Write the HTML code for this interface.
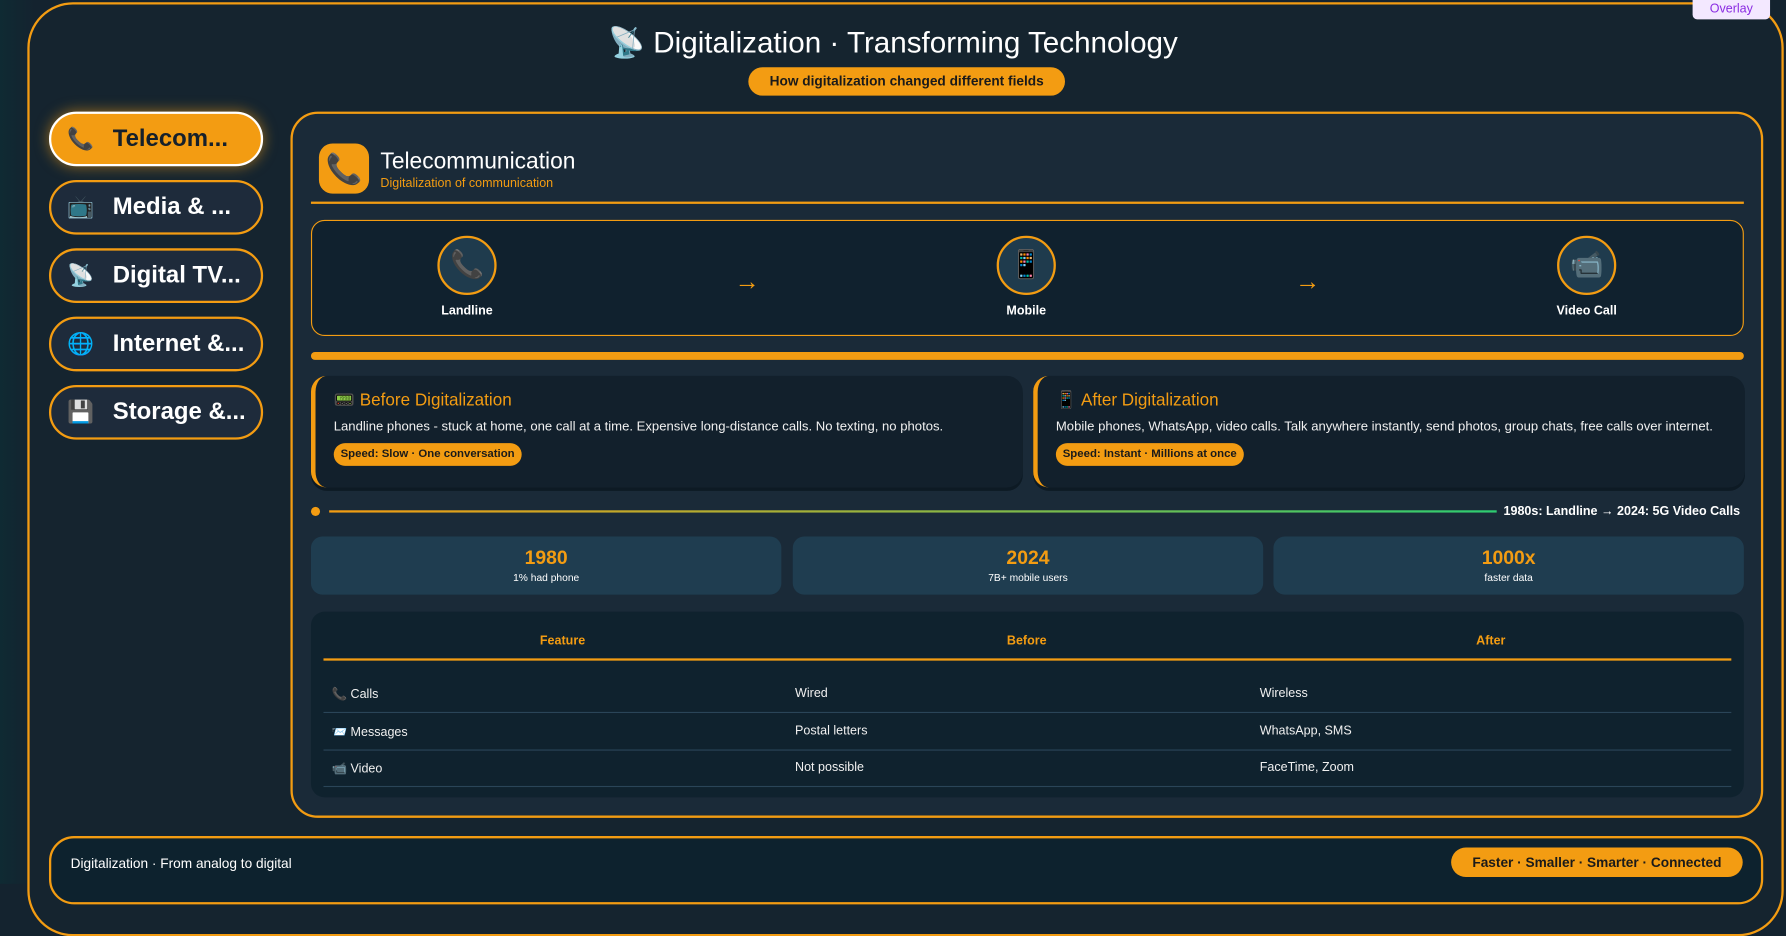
<!DOCTYPE html>
<html><head><meta charset="utf-8">
<style>
*{box-sizing:border-box;margin:0;padding:0}
html,body{width:1786px;height:884px;overflow:hidden;background:#14232f}
body{font-family:"Liberation Sans","Noto Sans CJK SC",sans-serif;color:#fff}
#w{position:absolute;left:0;top:0;width:1568px;height:776px;transform:scale(1.13903);transform-origin:0 0;background:linear-gradient(90deg,#0f2a33 0,#14232f 30px,#14232f 100%)}
.a{position:absolute}
.frame{left:24px;top:2px;width:1542px;height:820px;border:2px solid #f39c12;border-radius:40px;background:#15242f}
.title{left:0;width:1568px;top:22px;text-align:center;font-size:26px;color:#fff}
.pill{left:657px;top:59px;width:278px;height:25px;background:#f39c12;border-radius:13px;color:#1a1a1a;font-size:12px;font-weight:bold;text-align:center;line-height:25px}
.ov{left:1486px;top:-4px;width:68px;height:21px;background:#f3e8ff;border-radius:4px;color:#8a2be2;font-size:11px;text-align:center;line-height:18px;padding-top:3px}
.nav{left:43px;width:188px;height:48px;border:2px solid #f39c12;border-radius:24px;background:#1e2b3b;font-size:21px;font-weight:bold;line-height:44px;padding-left:14px;white-space:nowrap;overflow:hidden}
.nav span{display:inline-block;width:40px;font-size:19px}
.nav.on{background:#f39c12;border-color:#fff;color:#15202b;box-shadow:0 0 12px rgba(243,156,18,.6)}
.panel{left:255px;top:98px;width:1293px;height:620px;border:2px solid #f39c12;border-radius:24px;background:#1a2a38}
.box{border-radius:12px}
.circ{width:52px;height:52px;border-radius:50%;border:2px solid #f39c12;background:#1f3b4d;text-align:center;line-height:48px;font-size:24px}
.lab{font-size:11px;font-weight:bold;width:120px;text-align:center}
.arr{color:#f39c12;font-size:22px}
.card{top:330px;height:98px;width:625px;background:#12202c;border-radius:14px;border-left:4px solid #f39c12;box-shadow:0 3px 0 #0d1a24;padding:12px 0 0 16px}
.card h3{font-weight:normal;color:#f39c12;font-size:15px;margin-bottom:9px}
.card p{font-size:11.5px;color:#f0f0f0;margin-bottom:7px}
.badge{display:inline-block;background:#f39c12;color:#1a1a1a;font-size:10px;font-weight:bold;padding:0 6px;height:20px;line-height:20px;border-radius:10px}
.stat{top:471px;height:51px;width:413px;background:#1f3d50;border-radius:10px;text-align:center}
.stat b{display:block;color:#f39c12;font-size:17px;margin-top:9px}
.stat i{display:block;font-style:normal;font-size:9px;margin-top:2px}
.th{color:#f39c12;font-size:11px;font-weight:bold;top:557px}
.td{font-size:11px;color:#f0f0f0}
.sep{left:284px;width:1236px;height:1px;background:#2a4558}
</style></head><body><div id="w">
<div class="a frame"></div>
<div class="a ov">Overlay</div>
<div class="a title">📡 Digitalization · Transforming Technology</div>
<div class="a pill">How digitalization changed different fields</div>

<div class="a nav on" style="top:98px"><span>📞</span>Telecom...</div>
<div class="a nav" style="top:158px"><span>📺</span>Media &amp; ...</div>
<div class="a nav" style="top:218px"><span>📡</span>Digital TV...</div>
<div class="a nav" style="top:278px"><span>🌐</span>Internet &amp;...</div>
<div class="a nav" style="top:338px"><span>💾</span>Storage &amp;...</div>

<div class="a panel"></div>
<div class="a" style="left:280px;top:126px;width:44px;height:44px;background:#f39c12;border-radius:12px;text-align:center;line-height:44px;font-size:26px">📞</div>
<div class="a" style="left:334px;top:131px;font-size:20px">Telecommunication</div>
<div class="a" style="left:334px;top:155px;font-size:11px;color:#f39c12">Digitalization of communication</div>
<div class="a" style="left:273px;top:177px;width:1258px;height:2px;background:#f39c12"></div>

<div class="a box" style="left:273px;top:193px;width:1258px;height:102px;border:1px solid #f39c12;background:#10212e"></div>
<div class="a circ" style="left:384px;top:207px">📞</div>
<div class="a circ" style="left:875px;top:207px">📱</div>
<div class="a circ" style="left:1367px;top:207px">📹</div>
<div class="a lab" style="left:350px;top:267px">Landline</div>
<div class="a lab" style="left:841px;top:267px">Mobile</div>
<div class="a lab" style="left:1333px;top:267px">Video Call</div>
<div class="a arr" style="left:645px;top:234px">→</div>
<div class="a arr" style="left:1137px;top:234px">→</div>

<div class="a" style="left:273px;top:309px;width:1258px;height:7px;background:#f39c12;border-radius:4px"></div>

<div class="a card" style="left:273px"><h3>📟 Before Digitalization</h3><p>Landline phones - stuck at home, one call at a time. Expensive long-distance calls. No texting, no photos.</p><span class="badge">Speed: Slow · One conversation</span></div>
<div class="a card" style="left:907px"><h3>📱 After Digitalization</h3><p>Mobile phones, WhatsApp, video calls. Talk anywhere instantly, send photos, group chats, free calls over internet.</p><span class="badge">Speed: Instant · Millions at once</span></div>

<div class="a" style="left:273px;top:445px;width:8px;height:8px;border-radius:50%;background:#f39c12"></div>
<div class="a" style="left:289px;top:448px;width:1025px;height:2px;background:linear-gradient(90deg,#f39c12,#2ecc71)"></div>
<div class="a" style="left:1320px;top:443px;font-size:11px;font-weight:bold">1980s: Landline → 2024: 5G Video Calls</div>

<div class="a stat" style="left:273px"><b>1980</b><i>1% had phone</i></div>
<div class="a stat" style="left:696px"><b>2024</b><i>7B+ mobile users</i></div>
<div class="a stat" style="left:1118px"><b>1000x</b><i>faster data</i></div>

<div class="a box" style="left:273px;top:537px;width:1258px;height:163px;background:#0f222e"></div>
<div class="a th" style="left:474px">Feature</div>
<div class="a th" style="left:884px">Before</div>
<div class="a th" style="left:1296px">After</div>
<div class="a" style="left:284px;top:578px;width:1236px;height:2px;background:#f39c12"></div>
<div class="a td" style="left:291px;top:603px">📞 Calls</div>
<div class="a td" style="left:698px;top:603px">Wired</div>
<div class="a td" style="left:1106px;top:603px">Wireless</div>
<div class="a sep" style="top:625px"></div>
<div class="a td" style="left:291px;top:636px">📨 Messages</div>
<div class="a td" style="left:698px;top:636px">Postal letters</div>
<div class="a td" style="left:1106px;top:636px">WhatsApp, SMS</div>
<div class="a sep" style="top:658px"></div>
<div class="a td" style="left:291px;top:668px">📹 Video</div>
<div class="a td" style="left:698px;top:668px">Not possible</div>
<div class="a td" style="left:1106px;top:668px">FaceTime, Zoom</div>
<div class="a sep" style="top:690px"></div>

<div class="a" style="left:43px;top:734px;width:1505px;height:60px;border:2px solid #f39c12;border-radius:22px;background:#0d222e"></div>
<div class="a" style="left:62px;top:751px;font-size:12px">Digitalization · From analog to digital</div>
<div class="a" style="left:1274px;top:744px;width:256px;height:26px;background:#f39c12;border-radius:13px;color:#1a1a1a;font-size:12px;font-weight:bold;text-align:center;line-height:26px">Faster · Smaller · Smarter · Connected</div>
</div></body></html>
